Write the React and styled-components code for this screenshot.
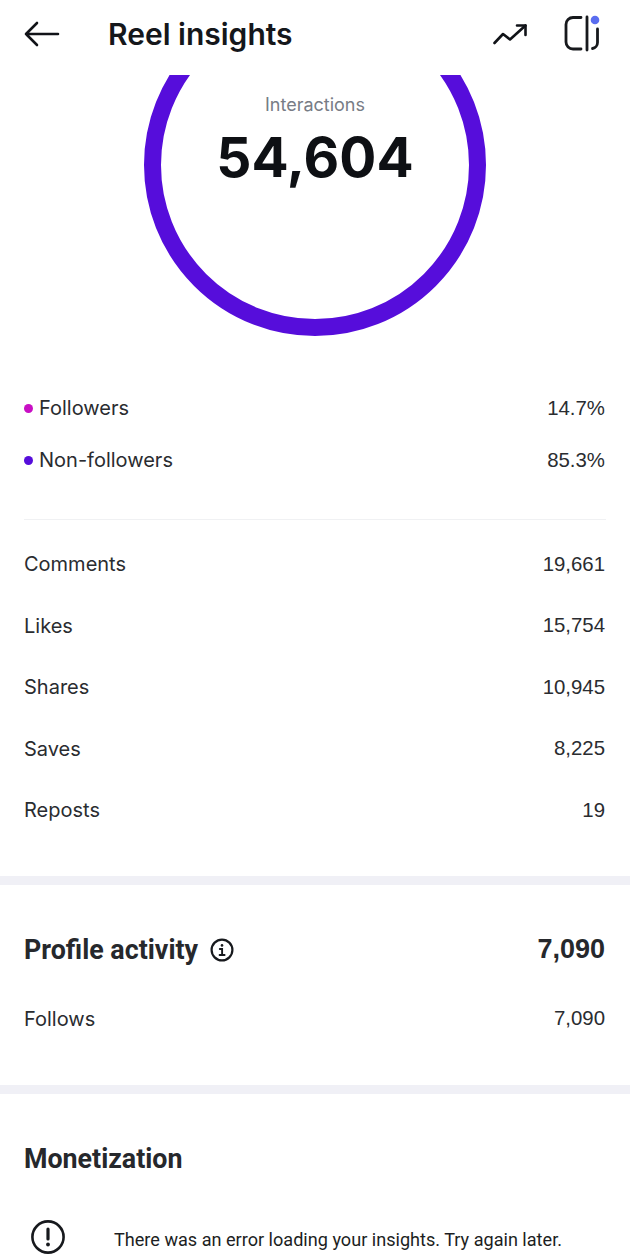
import React from "react";
import styled, { createGlobalStyle } from "styled-components";

const GlobalStyle = createGlobalStyle`
  html, body {
    margin: 0;
    padding: 0;
    background: #fff;
  }
  body {
    font-family: Inter, "Liberation Sans", sans-serif;
    color: #26282c;
  }
`;

const interactions = [
  { label: "Comments", value: "19,661" },
  { label: "Likes", value: "15,754" },
  { label: "Shares", value: "10,945" },
  { label: "Saves", value: "8,225" },
  { label: "Reposts", value: "19" },
];

const Page = styled.div`
  width: 630px;
  height: 1260px;
  overflow: hidden;
  background: #fff;
`;

const Header = styled.header`
  height: 75px;
  display: flex;
  align-items: center;
  padding: 0 28px 7px 24px;
  box-sizing: border-box;
`;

const IconButton = styled.span`
  display: flex;
  color: #111318;
`;

const Title = styled.h1`
  margin: 0 0 0 48px;
  flex: 1;
  font-size: 30px;
  font-weight: 600;
  color: #15171b;
`;

const HeaderActions = styled.div`
  display: flex;
  align-items: center;
  gap: 37px;
`;

const Chart = styled.section`
  position: relative;
  height: 261px;
  display: flex;
  justify-content: center;
`;

const ChartCenter = styled.div`
  position: absolute;
  top: 18px;
  left: 0;
  right: 0;
  text-align: center;
`;

const ChartLabel = styled.div`
  font-size: 18px;
  line-height: 24px;
  color: #777c85;
`;

const ChartValue = styled.div`
  font-size: 55px;
  line-height: 68px;
  font-weight: 700;
  color: #0e1014;
  margin-top: 6px;
`;

const Legend = styled.section`
  margin-top: 46px;
  padding: 0 24px 33px;
`;

const Row = styled.div`
  display: flex;
  align-items: center;
  justify-content: space-between;
  height: ${(p) => p.$height || 61.5}px;
  font-size: 20px;
  color: #2a2c30;
`;

const RowLabel = styled.span`
  display: flex;
  align-items: center;
  gap: 6px;
`;

const RowValue = styled.span`
  font-family: "Liberation Sans", Arial, sans-serif;
  font-size: 20.4px;
  margin-right: 1px;
`;

const Dot = styled.i`
  width: 9px;
  height: 9px;
  border-radius: 50%;
  background: ${(p) => p.$color};
`;

const Divider = styled.hr`
  margin: 0 24px;
  border: 0;
  height: 1px;
  background: #f0f1f3;
`;

const Breakdown = styled.section`
  margin-top: 13.5px;
  padding: 0 24px 34.5px;
`;

const Band = styled.div`
  height: 9px;
  background: #f0f0f6;
`;

const Activity = styled.section`
  padding: 33px 24px 35px;
`;

const HeadRow = styled.div`
  display: flex;
  align-items: center;
  justify-content: space-between;
  height: 64px;
  margin-bottom: 6px;
`;

const Heading = styled.h2`
  margin: 0;
  display: flex;
  align-items: center;
  gap: 12px;
  font-family: Roboto, "Liberation Sans", sans-serif;
  font-size: 26.8px;
  line-height: 30px;
  font-weight: 700;
  color: #26282c;
`;

const HeadValue = styled.span`
  font-family: "Liberation Sans", Arial, sans-serif;
  font-size: 27px;
  font-weight: 700;
  margin-right: 1px;
  color: #26282c;
`;

const Monetization = styled.section`
  padding: 50px 24px 0;
`;

const ErrorRow = styled.div`
  display: flex;
  align-items: center;
  gap: 48px;
  margin: 45px 0 0 6px;
  font-family: Roboto, "Liberation Sans", sans-serif;
  font-size: 18.1px;
  color: #1c1e22;
`;

const ErrorText = styled.span`
  padding-top: 6px;
`;

const BackIcon = () => (
  <svg width="36" height="26" viewBox="0 0 36 26" fill="none" stroke="currentColor" strokeWidth="2.6" strokeLinecap="round" strokeLinejoin="round">
    <path d="M2 13h32M13 2 2 13l11 11" />
  </svg>
);

const TrendIcon = () => (
  <svg width="34" height="22" viewBox="0 0 34 22" fill="none" stroke="currentColor" strokeWidth="2.6" strokeLinecap="round" strokeLinejoin="round">
    <path d="M1.5 20 10 11l7 5.5L32.5 2.5" />
    <path d="M24 2.5h8.5V12" />
  </svg>
);

const LogoIcon = () => (
  <svg width="38" height="38" viewBox="0 0 38 38" fill="none" strokeLinecap="round">
    <path d="M17 2.5H9a7 7 0 0 0-7 7v17.5a7 7 0 0 0 7 7h8" stroke="#17191d" strokeWidth="2.8" />
    <path d="M23 2v33" stroke="#17191d" strokeWidth="2.8" />
    <path d="M33.5 14v13.5a6 6 0 0 1-5 6" stroke="#17191d" strokeWidth="2.8" />
    <circle cx="31" cy="5" r="4.3" fill="#5a6df0" />
  </svg>
);

const InfoIcon = () => (
  <svg width="24" height="24" viewBox="0 0 24 24" fill="none" stroke="#17191d" strokeWidth="2.2" strokeLinecap="round">
    <circle cx="12" cy="12" r="10.4" />
    <path d="M9.8 11h2.3v6M9.6 17h5" strokeWidth="1.9" />
    <circle cx="12" cy="7.4" r="1.3" fill="#17191d" stroke="none" />
  </svg>
);

const AlertIcon = () => (
  <svg width="36" height="36" viewBox="0 0 36 36" fill="none" stroke="#17191d" strokeWidth="2.6" strokeLinecap="round">
    <circle cx="18" cy="18" r="15.6" />
    <path d="M18 10v10" strokeWidth="3.2" />
    <circle cx="18" cy="25.5" r="1.9" fill="#17191d" stroke="none" />
  </svg>
);

const Ring = () => (
  <svg width="342" height="261" viewBox="0 0 342 261" fill="none">
    <circle cx="171" cy="90" r="162.5" stroke="#560ddb" strokeWidth="17" />
  </svg>
);

export default function App() {
  return (
    <Page>
      <GlobalStyle />
      <Header>
        <IconButton><BackIcon /></IconButton>
        <Title>Reel insights</Title>
        <HeaderActions>
          <IconButton><TrendIcon /></IconButton>
          <IconButton><LogoIcon /></IconButton>
        </HeaderActions>
      </Header>

      <Chart>
        <Ring />
        <ChartCenter>
          <ChartLabel>Interactions</ChartLabel>
          <ChartValue>54,604</ChartValue>
        </ChartCenter>
      </Chart>

      <Legend>
        <Row $height={52}>
          <RowLabel><Dot $color="#c80fc4" />Followers</RowLabel>
          <RowValue>14.7%</RowValue>
        </Row>
        <Row $height={52}>
          <RowLabel><Dot $color="#560ddb" />Non-followers</RowLabel>
          <RowValue>85.3%</RowValue>
        </Row>
      </Legend>
      <Divider />

      <Breakdown>
        {interactions.map((item) => (
          <Row key={item.label}>
            <span>{item.label}</span>
            <RowValue>{item.value}</RowValue>
          </Row>
        ))}
      </Breakdown>
      <Band />

      <Activity>
        <HeadRow>
          <Heading>Profile activity <InfoIcon /></Heading>
          <HeadValue>7,090</HeadValue>
        </HeadRow>
        <Row $height={62}>
          <span>Follows</span>
          <RowValue>7,090</RowValue>
        </Row>
      </Activity>
      <Band />

      <Monetization>
        <Heading>Monetization</Heading>
        <ErrorRow>
          <AlertIcon />
          <ErrorText>There was an error loading your insights. Try again later.</ErrorText>
        </ErrorRow>
      </Monetization>
    </Page>
  );
}
